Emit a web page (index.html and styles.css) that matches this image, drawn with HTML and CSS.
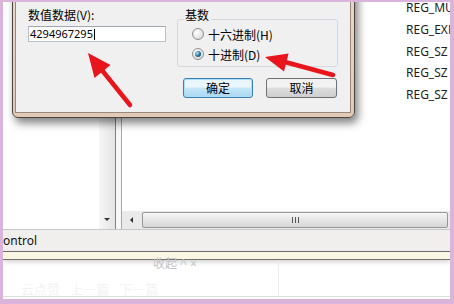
FILE: index.html
```html
<!DOCTYPE html>
<html lang="zh-CN">
<head>
    <meta charset="UTF-8">
    <meta name="viewport" content="width=device-width, initial-scale=1.0">
    <title>编辑 DWORD (32 位)值</title>
    <link rel="stylesheet" href="styles.css">
</head>
<body>
    <div class="screen">
        <!-- janela do editor de registro por baixo -->
        <div class="regedit">
            <div class="panes">
                <div class="tree"></div>
                <div class="vscroll"><span class="arrow-down"></span></div>
                <div class="splitter"></div>
                <div class="list">
                    <ul class="rows">
                        <li>REG_MULTI_SZ</li>
                        <li>REG_EXPAND_SZ</li>
                        <li>REG_SZ</li>
                        <li>REG_SZ</li>
                        <li>REG_SZ</li>
                    </ul>
                    <div class="hscroll">
                        <span class="btn-left"><span class="arrow-left"></span></span>
                        <span class="thumb"><span class="grip"></span></span>
                    </div>
                </div>
            </div>
            <div class="status">ontrol</div>
            <div class="cream"></div>
            <div class="page">
                <div class="page-top">
                    <div class="page-left">
                        <div class="ghost-fold">收起 ^ ×</div>
                        <div class="ghost-nav">云点赞 &nbsp; 上一篇 &nbsp; 下一篇</div>
                    </div>
                    <div class="page-right"></div>
                </div>
                <div class="page-foot"></div>
            </div>
        </div>

        <!-- caixa de dialogo -->
        <div class="dialog">
            <div class="dlg-body">
                <div class="col-left">
                    <label class="lbl">数值数据(V):</label>
                    <div class="input">4294967295<span class="caret"></span></div>
                </div>
                <div class="col-right">
                    <fieldset class="group">
                        <legend>基数</legend>
                        <div class="radio-row"><span class="radio"></span>十六进制(H)</div>
                        <div class="radio-row"><span class="radio checked"></span>十进制(D)</div>
                    </fieldset>
                    <div class="buttons">
                        <button class="btn default">确定</button>
                        <button class="btn">取消</button>
                    </div>
                </div>
            </div>
        </div>
    </div>

    <!-- setas vermelhas -->
    <svg class="arrows" width="454" height="304" viewBox="0 0 454 304">
        <line x1="130" y1="105" x2="101" y2="69" stroke="#e8161c" stroke-width="4.5" stroke-linecap="round"/>
        <polygon points="88,53 110.5,65 94.5,78" fill="#e8161c"/>
        <line x1="333" y1="75" x2="285" y2="62" stroke="#e8161c" stroke-width="4.5" stroke-linecap="round"/>
        <polygon points="265,57 288.6,53.5 284,71.5" fill="#e8161c"/>
    </svg>
</body>
</html>
```

FILE: styles.css
```css
/* base */
body {
    margin: 0;
    position: relative;
    width: 454px;
    height: 304px;
    overflow: hidden;
    font-family: "Noto Sans", "Noto Sans CJK SC", sans-serif;
    color: #000;
}

/* moldura rosa da captura */
.screen {
    box-sizing: border-box;
    width: 454px;
    height: 304px;
    border-style: solid;
    border-color: #dab4da;
    border-width: 2px 4px 5px 3px;
    position: relative;
    overflow: hidden;
    background: #fff;
}

.regedit {
    display: flex;
    flex-direction: column;
    height: 100%;
}

.panes {
    display: flex;
    height: 230px;
}

.tree {
    width: 96px;
    background: #fff;
}

.vscroll {
    width: 16px;
    box-sizing: border-box;
    background: linear-gradient(90deg, #f6f6f6, #e4e4e4);
    display: flex;
    align-items: flex-end;
    justify-content: center;
    padding-bottom: 8px;
}

.arrow-down {
    border-left: 3px solid transparent;
    border-right: 3px solid transparent;
    border-top: 3px solid #333;
}

.splitter {
    width: 7px;
    box-sizing: border-box;
    border-left: 1px solid #808080;
    border-right: 1px solid #a8a8a8;
    background: #f7f7f7;
}

.list {
    flex: 1;
    min-width: 0;
    display: flex;
    flex-direction: column;
}

.rows {
    flex: 1;
    margin: -5px 0 0;
    padding: 0 0 0 284px;
    list-style: none;
    font-size: 12px;
    color: #1e1e1e;
    white-space: nowrap;
}

.rows li {
    height: 21.75px;
    line-height: 21.75px;
}

/* barra de rolagem horizontal */
.hscroll {
    height: 18px;
    box-sizing: border-box;
    padding: 1px 2px 1px 0;
    display: flex;
    background: #eaeaea;
}

.btn-left {
    width: 18px;
    display: flex;
    align-items: center;
    justify-content: center;
}

.arrow-left {
    border-top: 3px solid transparent;
    border-bottom: 3px solid transparent;
    border-right: 3px solid #333;
}

.thumb {
    flex: 1;
    margin-left: 2px;
    border: 1px solid #979797;
    border-radius: 2px;
    background: linear-gradient(#f6f6f6, #e6e6e6 50%, #d6d6d6);
    display: flex;
    align-items: center;
    justify-content: center;
}

.grip {
    width: 7px;
    height: 6px;
    background: repeating-linear-gradient(90deg, #555 0 1px, transparent 1px 3px);
}

/* barra de status */
.status {
    height: 23px;
    box-sizing: border-box;
    border-top: 1px solid #c8c8c8;
    border-bottom: 1px solid #6f6f6f;
    background: #f1efed;
    font-size: 12px;
    line-height: 21px;
    color: #111;
}

.cream {
    height: 7px;
    background: #fbf5e4;
    border-bottom: 1px solid #707070;
    box-shadow: 0 2px 5px rgba(0, 0, 0, 0.18);
}

.page {
    flex: 1;
    display: flex;
    flex-direction: column;
}

.page-top {
    flex: 1;
    display: flex;
}

.page-left {
    width: 275px;
    border-right: 1px solid #ececec;
}

.ghost-fold {
    margin-top: -2px;
    padding-left: 150px;
    font-size: 12px;
    line-height: 12px;
    color: #c4c4c4;
}

.ghost-nav {
    margin-top: 12px;
    padding-left: 18px;
    font-size: 13px;
    line-height: 14px;
    color: #f3f3f3;
}

.page-foot {
    height: 2px;
    border-top: 1px solid #dedede;
}

/* dialogo */
.dialog {
    position: absolute;
    left: 9px;
    top: -20px;
    width: 343px;
    height: 136px;
    box-sizing: border-box;
    border: 1px solid #4b4440;
    border-radius: 0 0 6px 6px;
    padding: 0 3px 4px 2px;
    background: linear-gradient(#e9d8ca, #dfcab9);
    box-shadow: 3px 5px 9px rgba(0, 0, 0, 0.5);
}

.dlg-body {
    height: 100%;
    box-sizing: border-box;
    border: 1px solid #9a8878;
    background: #f0f0f0;
    padding: 24px 12px 0;
    display: flex;
    gap: 11px;
    font-family: "Noto Sans CJK SC", sans-serif;
    font-size: 12px;
}

.col-left {
    width: 138px;
    display: flex;
    flex-direction: column;
}

.lbl {
    line-height: 14px;
}

.input {
    margin-top: 4px;
    height: 16px;
    box-sizing: border-box;
    border: 1px solid #b9c0ca;
    border-top-color: #a0a7b1;
    background: #fff;
    padding-left: 1px;
    font-family: "Noto Sans", sans-serif;
    font-size: 11px;
    line-height: 14px;
}

.caret {
    display: inline-block;
    width: 1px;
    height: 11px;
    margin-left: 1px;
    vertical-align: -2px;
    background: #000;
}

.col-right {
    width: 161px;
}

.group {
    margin: 0;
    padding: 0 0 2px 6px;
    border: 1px solid #d3d9de;
    border-radius: 3px;
}

.group legend {
    padding: 0 2px 8px 1px;
    line-height: 14px;
}

.radio-row {
    display: flex;
    align-items: center;
    gap: 4px;
    height: 20px;
    margin-left: 8px;
}

.radio-row:first-of-type {
    margin-top: -6px;
}

.radio {
    position: relative;
    width: 12px;
    height: 12px;
    box-sizing: border-box;
    border: 1px solid #8f8f8f;
    border-radius: 50%;
    background: radial-gradient(circle at 35% 35%, #fff, #dcdcdc 80%);
}

.radio.checked::after {
    content: "";
    position: absolute;
    left: 2px;
    top: 2px;
    width: 6px;
    height: 6px;
    border-radius: 50%;
    background: radial-gradient(circle at 35% 35%, #b4e8ff, #1d6b8f 55%, #0e3f57);
}

.buttons {
    display: flex;
    gap: 13px;
    margin-top: 11px;
    padding-left: 6px;
}

.btn {
    width: 71px;
    height: 20px;
    box-sizing: border-box;
    padding: 0;
    border: 1px solid #707070;
    border-radius: 3px;
    background: linear-gradient(#f2f2f2 0 45%, #dddddd 50%, #cfcfcf);
    font-family: "Noto Sans CJK SC", sans-serif;
    font-size: 12px;
    line-height: 18px;
    color: #000;
}

.btn.default {
    width: 70px;
    border-color: #3c7fb1;
    background: linear-gradient(#eaf6fd 0 45%, #c6e6f8 50%, #a9d8f2);
    box-shadow: inset 0 0 0 1px #a9dff8;
}

/* setas por cima de tudo */
.arrows {
    position: absolute;
    left: 0;
    top: 0;
    pointer-events: none;
}
```
